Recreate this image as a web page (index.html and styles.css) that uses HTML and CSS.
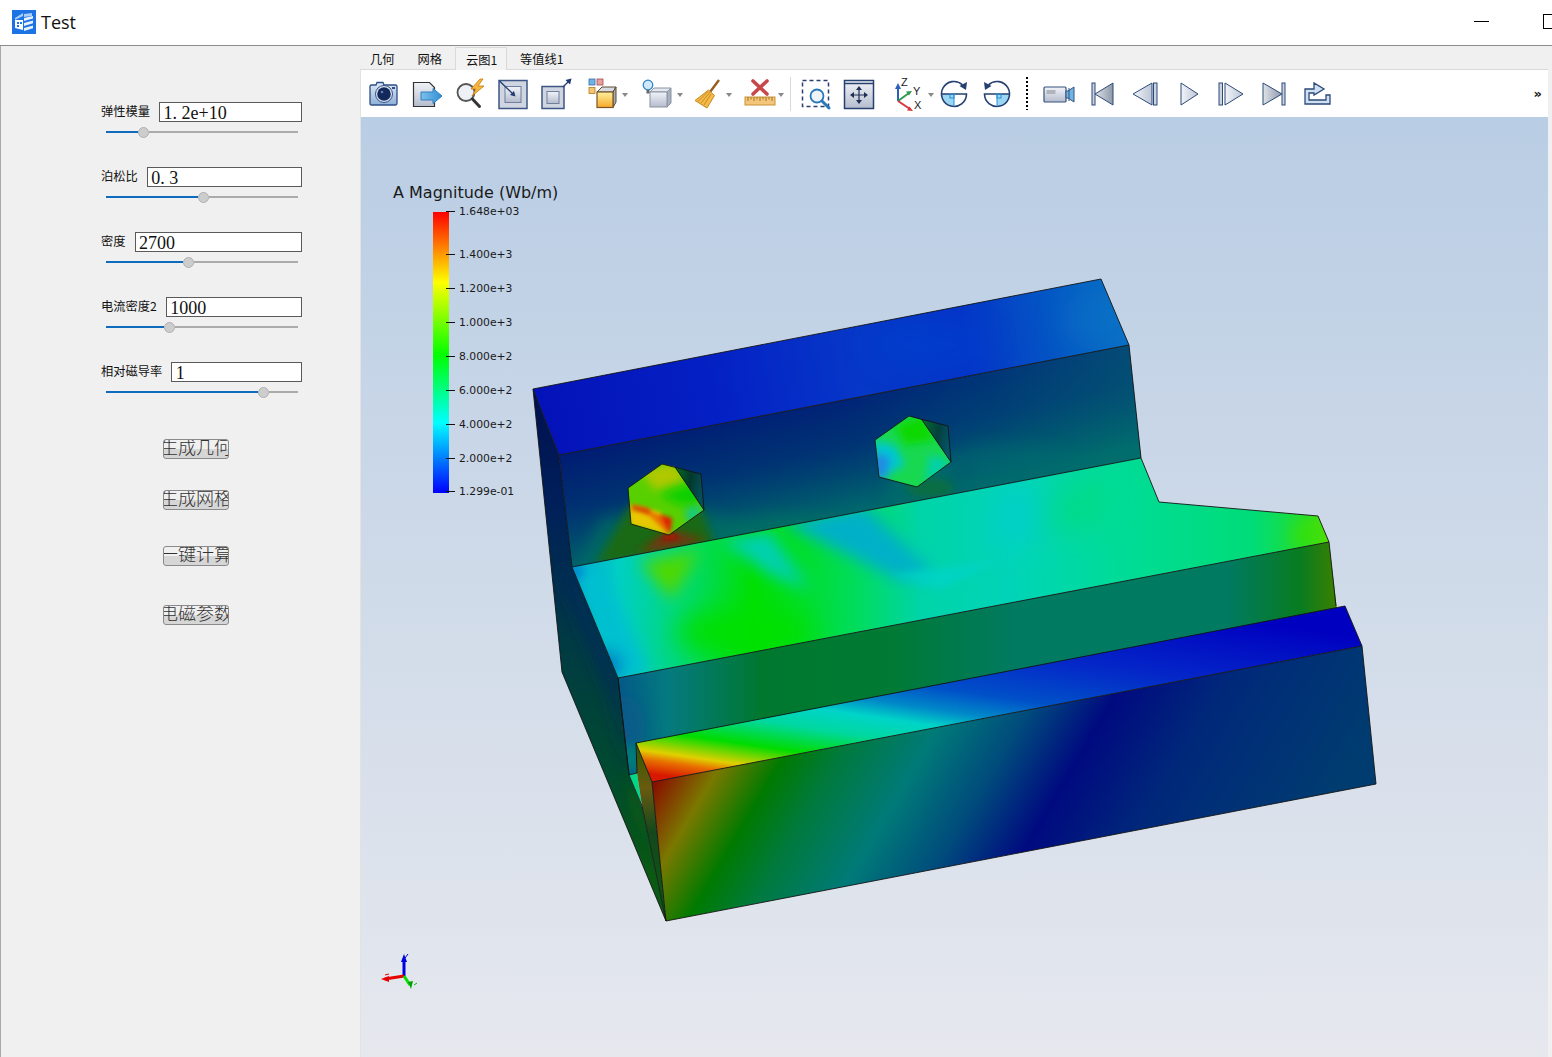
FILE: index.html
```html
<!DOCTYPE html>
<html lang="zh">
<head>
<meta charset="utf-8">
<title>Test</title>
<link rel="stylesheet" href="styles.css">
</head>
<body>
<div class="window">
  <header class="titlebar">
    <svg class="app-icon" viewBox="0 0 24 24"><rect width="24" height="24" fill="#1c74e4"/><path d="M3 8 11 3v3L3 10zM12 4l8-1v3l-8 1z" fill="#a9cdf6"/><path d="M3 10h8v10l-8-2z" fill="#fff"/><path d="M5 12h2v2H5zM5 15h2v2H5zM8 12h2v2H8z" fill="#1c74e4"/><path d="M12 8l9-2v2.600l-9 2.400zM12 13l9-2.400v2.600L12 16zM12 18l9-2.400v2.600L12 21z" fill="#e8f2fd"/></svg>
    <span class="app-name">Test</span>
    <span class="win-min"></span>
    <span class="win-max"></span>
  </header>
  <div class="main">
    <aside class="panel">
      <div class="field">
        <div class="field-row"><span class="field-label">弹性模量</span><div class="field-input">1. 2e+10</div></div>
        <div class="slider"><span class="fill" style="width:32px"></span><span class="knob"></span><span class="rest"></span></div>
      </div>
      <div class="field">
        <div class="field-row"><span class="field-label">泊松比</span><div class="field-input">0. 3</div></div>
        <div class="slider"><span class="fill" style="width:92px"></span><span class="knob"></span><span class="rest"></span></div>
      </div>
      <div class="field">
        <div class="field-row"><span class="field-label">密度</span><div class="field-input">2700</div></div>
        <div class="slider"><span class="fill" style="width:77px"></span><span class="knob"></span><span class="rest"></span></div>
      </div>
      <div class="field">
        <div class="field-row"><span class="field-label">电流密度2</span><div class="field-input">1000</div></div>
        <div class="slider"><span class="fill" style="width:58px"></span><span class="knob"></span><span class="rest"></span></div>
      </div>
      <div class="field">
        <div class="field-row"><span class="field-label">相对磁导率</span><div class="field-input">1</div></div>
        <div class="slider"><span class="fill" style="width:152px"></span><span class="knob"></span><span class="rest"></span></div>
      </div>
      <div class="actions">
        <button class="action">生成几何</button>
        <button class="action">生成网格</button>
        <button class="action">一键计算</button>
        <button class="action">电磁参数</button>
      </div>
    </aside>
    <section class="workspace">
      <nav class="tabs">
        <span class="tab">几何</span>
        <span class="tab">网格</span>
        <span class="tab tab-active">云图1</span>
        <span class="tab">等值线1</span>
      </nav>
      <div class="stage">
        <div class="toolbar">
          <svg class="tool m0" viewBox="0 0 32 32"><defs><linearGradient id="gCam" x1="0" y1="0" x2="0" y2="1"><stop offset="0" stop-color="#dfe9f6"/><stop offset="1" stop-color="#8fb0d8"/></linearGradient><linearGradient id="gGray" x1="0" y1="0" x2="0" y2="1"><stop offset="0" stop-color="#f1f3f8"/><stop offset="1" stop-color="#b4bccd"/></linearGradient><linearGradient id="gBlue" x1="0" y1="0" x2="1" y2="0"><stop offset="0" stop-color="#7fc0ea"/><stop offset="1" stop-color="#2f8fd4"/></linearGradient><linearGradient id="gSun" x1="0" y1="0" x2="0" y2="1"><stop offset="0" stop-color="#fff0a0"/><stop offset="1" stop-color="#f7a928"/></linearGradient><linearGradient id="gDark" x1="0" y1="0" x2="1" y2="0"><stop offset="0" stop-color="#dfe3ea"/><stop offset="1" stop-color="#8d98a8"/></linearGradient><linearGradient id="gLite" x1="0" y1="0" x2="1" y2="0"><stop offset="0" stop-color="#f2f4f8"/><stop offset="1" stop-color="#bcc6d6"/></linearGradient></defs><path d="M2 8.500q0-1.500 1.500-1.500H8l1-2.500h6l1 2.500h11.500q1.500 0 1.500 1.500v17q0 1.500-1.500 1.500h-24Q2 27 2 25.500z" fill="url(#gCam)" stroke="#2c4f86" stroke-width="1.300"/><circle cx="16" cy="16" r="8.500" fill="#dce6f2" stroke="#35527f"/><circle cx="16" cy="16" r="6.800" fill="#13295c"/><circle cx="14" cy="14" r="1.300" fill="#5f7eb0"/><rect x="24" y="9" width="3" height="2" fill="#2c4f86"/></svg>
          <svg class="tool" viewBox="0 0 32 32"><path d="M2.500 4.500h16l5 5v19h-21z" fill="url(#gGray)" stroke="#333" stroke-width="1.200"/><path d="M10 14h12V10.500L31 18l-9 7.500V22H10z" fill="url(#gBlue)" stroke="#2f7fc0"/></svg>
          <svg class="tool" viewBox="0 0 32 32"><circle cx="12" cy="14.500" r="8.500" fill="#eef1f6" stroke="#555" stroke-width="1.800"/><path d="M18.500 21l7 7.500" stroke="#333" stroke-width="3" stroke-linecap="round"/><path d="M26 1 17 11h5l-4 7 12-10h-6l5-7z" fill="#f6b73c" stroke="#c97a10" stroke-width=".8"/></svg>
          <svg class="tool" viewBox="0 0 32 32"><rect x="2" y="2.500" width="28" height="28" fill="#cfd5e1" stroke="#3d5685" stroke-width="1.500"/><rect x="8" y="8.500" width="16" height="16" fill="url(#gGray)" stroke="#6f7f9c"/><path d="M2.500 3 17 17" stroke="#1e3a6e" stroke-width="1.300"/><path d="M18.500 18.500l-5.500-1.500 4-4z" fill="#1e3a6e"/></svg>
          <svg class="tool m10" viewBox="0 0 32 32"><rect x="3" y="8.500" width="22" height="22" fill="#cfd5e1" stroke="#3d5685" stroke-width="1.500"/><rect x="8" y="13.500" width="12" height="12" fill="url(#gGray)" stroke="#6f7f9c"/><path d="M24 9 30 3" stroke="#1e3a6e" stroke-width="1.300"/><path d="M32.500 .500l-1.500 6-4.500-4.500z" fill="#1e3a6e"/></svg>
          <span class="tool caret m17"><svg class="tool-svg" viewBox="0 0 32 32"><rect x="1" y="1" width="6" height="6" fill="#6db3e8" stroke="#3a6ea5" stroke-width=".8"/><rect x="9" y="1" width="6" height="6" fill="#e8a0a0" stroke="#a04a4a" stroke-width=".8"/><rect x="1" y="9.500" width="6" height="6" fill="#f7c470" stroke="#b07a20" stroke-width=".8"/><path d="M9 14l5-5h14l-3 5z" fill="#d6dbe4" stroke="#5b4a30"/><path d="M25 14l3-5v15l-3 5.500z" fill="#a6adba" stroke="#5b4a30"/><rect x="9" y="14" width="16" height="15.500" fill="url(#gSun)" stroke="#7a5526" stroke-width="1.200"/></svg></span>
          <span class="tool caret m23"><svg class="tool-svg" viewBox="0 0 32 32"><path d="M7 14l4-4h17l-4 4z" fill="#e4e7ec" stroke="#8a93a3"/><path d="M24 14l4-4v15l-4 4z" fill="#a8b1bf" stroke="#8a93a3"/><rect x="7" y="14" width="17" height="15" fill="url(#gGray)" stroke="#8a93a3"/><circle cx="5" cy="7" r="4.800" fill="#cfe8fa" stroke="#2a7fc0" stroke-width="1.200"/><path d="M3.500 12h3v3.500h-3z" fill="#666"/></svg></span>
          <span class="tool caret m17"><svg class="tool-svg" viewBox="0 0 32 32"><path d="M27 2 18 14" stroke="#9a5a20" stroke-width="2.400"/><path d="M16.500 12l6 5.500L15 30 3 22.500z" fill="#f4bb4a" stroke="#c88a20"/><path d="M9 25 18 14M12 27l7-11M6 23.500 16 13.500" stroke="#c88a20" fill="none"/></svg></span>
          <span class="tool caret m20"><svg class="tool-svg" viewBox="0 0 32 32"><path d="M9 3l14 13M23 3 9 16" stroke="#c8474a" stroke-width="3.600" stroke-linecap="round"/><rect x="1" y="19" width="30" height="8" fill="#f3c679" stroke="#c89238"/><path d="M4 19v4M7 19v2.500M10 19v4M13 19v2.500M16 19v4M19 19v2.500M22 19v4M25 19v2.500M28 19v4" stroke="#a87220"/></svg></span>
          <span class="sep-line"></span>
          <svg class="tool m8" viewBox="0 0 32 32"><rect x="3.500" y="2.500" width="26" height="26" fill="none" stroke="#2a3f6e" stroke-width="1.500" stroke-dasharray="4 3"/><circle cx="18" cy="18" r="6.500" fill="#eef3f9" stroke="#2a78b8" stroke-width="1.800"/><path d="M23 23l7 7" stroke="#2a78b8" stroke-width="3" stroke-linecap="round"/></svg>
          <svg class="tool m12" viewBox="0 0 32 32"><rect x="1.500" y="2.500" width="29" height="28" fill="url(#gGray)" stroke="#26406f" stroke-width="1.500"/><path d="M2 5.500h28" stroke="#26406f" stroke-width="1.500"/><path d="M16 10v14M9 17h14" stroke="#1f2f55" stroke-width="1.200"/><path d="M16 8l-3 4h6zM16 26l-3-4h6zM7 17l4-3v6zM25 17l-4-3v6z" fill="#1f2f55"/></svg>
          <span class="tool caret m19"><svg class="tool-svg" viewBox="0 0 32 32"><path d="M4 23V8" stroke="#2a62b8" stroke-width="2"/><path d="M4 5 1 11h6z" fill="#2a62b8"/><path d="M4 23 15 15" stroke="#2e9a50" stroke-width="2"/><path d="M18 13l-6 .500 3 4z" fill="#2e9a50"/><path d="M4 23l12 8" stroke="#d8383a" stroke-width="2"/><path d="M19 33l-6-.500 2.500-4z" fill="#d8383a"/><text x="7" y="8" class="axis-letter">Z</text><text x="19" y="17" class="axis-letter">Y</text><text x="20" y="31" class="axis-letter">X</text></svg></span>
          <svg class="tool m12" viewBox="0 0 32 32"><path d="M16 16V28.500A12.500 12.500 0 0 1 3.500 16z" fill="#9ad6f5"/><path d="M24.500 6.800A12.500 12.500 0 1 0 28.500 16H3.500" fill="none" stroke="#26406f" stroke-width="1.600"/><path d="M16 16V28.500" stroke="#2a8fd0"/><path d="M29 4 28 12 21.500 8z" fill="#26406f"/><rect x="12" y="16" width="4" height="4" fill="none" stroke="#2a8fd0"/></svg>
          <svg class="tool" viewBox="0 0 32 32"><path d="M16 16V28.500A12.500 12.500 0 0 0 28.500 16z" fill="#9ad6f5"/><path d="M7.500 6.800A12.500 12.500 0 1 1 3.500 16H28.500" fill="none" stroke="#26406f" stroke-width="1.600"/><path d="M16 16V28.500" stroke="#2a8fd0"/><path d="M3 4 4 12 10.500 8z" fill="#26406f"/><rect x="16" y="16" width="4" height="4" fill="none" stroke="#2a8fd0"/></svg>
          <span class="sep-dots"></span>
          <svg class="tool m15" viewBox="0 0 32 32"><rect x="1" y="9" width="22" height="15" rx="1" fill="url(#gGray)" stroke="#36527f" stroke-width="1.200"/><rect x="3.500" y="12" width="9" height="4" fill="#b0b4bb"/><path d="M23 13h2l6-4v15l-6-4h-2z" fill="#6fb4e4" stroke="#36527f"/><path d="M26 10v13" stroke="#36527f"/></svg>
          <svg class="tool" viewBox="0 0 32 32"><rect x="6" y="5" width="3" height="22" fill="#cbd3e0" stroke="#2d4a78"/><path d="M9 16 27 5v22z" fill="url(#gDark)" stroke="#2d4a78"/></svg>
          <svg class="tool" viewBox="0 0 32 32"><path d="M4 16 23 5v22z" fill="url(#gLite)" stroke="#2d4a78"/><rect x="24.500" y="5" width="3.500" height="22" fill="#cbd3e0" stroke="#2d4a78"/></svg>
          <svg class="tool" viewBox="0 0 32 32"><path d="M9 5 26 16 9 27z" fill="url(#gLite)" stroke="#2d4a78"/></svg>
          <svg class="tool" viewBox="0 0 32 32"><rect x="4" y="5" width="3.500" height="22" fill="#cbd3e0" stroke="#2d4a78"/><path d="M10 5 28 16 10 27z" fill="url(#gLite)" stroke="#2d4a78"/></svg>
          <svg class="tool" viewBox="0 0 32 32"><path d="M5 5 24 16 5 27z" fill="url(#gDark)" stroke="#2d4a78"/><rect x="24" y="5" width="3" height="22" fill="#cbd3e0" stroke="#2d4a78"/></svg>
          <svg class="tool" viewBox="0 0 32 32"><path d="M4 26V11H13V5L23 11 13 17V15H8V22H25V17H29V26Z" fill="#cfe0f2" stroke="#2d4a78" stroke-width="1.300"/></svg>
          <span class="more">»</span>
        </div>
        <div class="viewport">
          <svg class="scene" viewBox="361 117 1187 940">
            <defs>
              <filter id="b2" x="-50%" y="-50%" width="200%" height="200%"><feGaussianBlur stdDeviation="2"/></filter>
              <filter id="b4" x="-50%" y="-50%" width="200%" height="200%"><feGaussianBlur stdDeviation="4"/></filter>
              <filter id="b8" x="-50%" y="-50%" width="200%" height="200%"><feGaussianBlur stdDeviation="8"/></filter>
              <filter id="b14" x="-50%" y="-50%" width="200%" height="200%"><feGaussianBlur stdDeviation="14"/></filter>
              <linearGradient id="fTop" gradientUnits="userSpaceOnUse" x1="533" y1="420" x2="1129" y2="310">
                <stop offset="0" stop-color="#0412b8"/><stop offset=".3" stop-color="#0420c4"/><stop offset=".55" stop-color="#0638c8"/><stop offset=".72" stop-color="#0434c8"/><stop offset=".88" stop-color="#0458c4"/><stop offset="1" stop-color="#0870c4"/>
              </linearGradient>
              <linearGradient id="fBack" gradientUnits="userSpaceOnUse" x1="559" y1="500" x2="1141" y2="400">
                <stop offset="0" stop-color="#001a74"/><stop offset=".5" stop-color="#001f78"/><stop offset=".75" stop-color="#00307a"/><stop offset="1" stop-color="#044878"/>
              </linearGradient>
              <linearGradient id="fBackV" gradientUnits="userSpaceOnUse" x1="800" y1="400" x2="825" y2="515">
                <stop offset="0" stop-color="#006a60" stop-opacity="0"/><stop offset=".45" stop-color="#00606c" stop-opacity=".3"/><stop offset="1" stop-color="#00786a" stop-opacity=".8"/>
              </linearGradient>
              <linearGradient id="fMid" gradientUnits="userSpaceOnUse" x1="572" y1="0" x2="1329" y2="0">
                <stop offset="0" stop-color="#00a0d0"/><stop offset=".06" stop-color="#00cfc4"/><stop offset=".14" stop-color="#00d880"/><stop offset=".24" stop-color="#00e000"/><stop offset=".38" stop-color="#00dc60"/><stop offset=".46" stop-color="#00d4a8"/><stop offset=".58" stop-color="#00d4b8"/><stop offset=".72" stop-color="#00dc98"/><stop offset=".9" stop-color="#00dc78"/><stop offset=".97" stop-color="#20de30"/><stop offset="1" stop-color="#60dc10"/>
              </linearGradient>
              <linearGradient id="fWall" gradientUnits="userSpaceOnUse" x1="618" y1="0" x2="1336" y2="0">
                <stop offset="0" stop-color="#045a88"/><stop offset=".07" stop-color="#047a80"/><stop offset=".2" stop-color="#00782e"/><stop offset=".38" stop-color="#007a34"/><stop offset=".55" stop-color="#007a60"/><stop offset=".85" stop-color="#007a60"/><stop offset=".95" stop-color="#087c20"/><stop offset="1" stop-color="#3a8000"/>
              </linearGradient>
              <linearGradient id="fRidge" gradientUnits="userSpaceOnUse" x1="720" y1="784" x2="755" y2="547">
                <stop offset="0" stop-color="#d81800"/><stop offset=".057" stop-color="#e87000"/><stop offset=".093" stop-color="#e0d000"/><stop offset=".18" stop-color="#00dc00"/><stop offset=".286" stop-color="#00d8a0"/><stop offset=".37" stop-color="#00d4c8"/><stop offset=".44" stop-color="#0088c8"/><stop offset=".53" stop-color="#0050c8"/><stop offset=".71" stop-color="#0428c8"/><stop offset="1" stop-color="#0000c0"/>
              </linearGradient>
              <linearGradient id="fFront" gradientUnits="userSpaceOnUse" x1="652" y1="782" x2="1162" y2="1082">
                <stop offset="0" stop-color="#8a0800"/><stop offset=".085" stop-color="#7a7800"/><stop offset=".17" stop-color="#007a00"/><stop offset=".25" stop-color="#007a3c"/><stop offset=".37" stop-color="#007a78"/><stop offset=".49" stop-color="#004a7c"/><stop offset=".6" stop-color="#000a80"/><stop offset=".75" stop-color="#00287a"/><stop offset="1" stop-color="#003c70"/>
              </linearGradient>
              <linearGradient id="fSide" gradientUnits="userSpaceOnUse" x1="0" y1="390" x2="40" y2="920">
                <stop offset="0" stop-color="#000a4c"/><stop offset=".3" stop-color="#00205a"/><stop offset=".55" stop-color="#003a44"/><stop offset=".8" stop-color="#004a30"/><stop offset="1" stop-color="#0a5a14"/>
              </linearGradient>
              <linearGradient id="fStrip" gradientUnits="userSpaceOnUse" x1="0" y1="743" x2="0" y2="921">
                <stop offset="0" stop-color="#2a5a00"/><stop offset=".25" stop-color="#6a5a10"/><stop offset=".5" stop-color="#14481c"/><stop offset="1" stop-color="#0a5a10"/>
              </linearGradient>
              <linearGradient id="fShade1" gradientUnits="userSpaceOnUse" x1="675" y1="475" x2="704" y2="480">
                <stop offset="0" stop-color="#006a20"/><stop offset=".55" stop-color="#04382c"/><stop offset="1" stop-color="#045058"/>
              </linearGradient>
              <linearGradient id="fShade2" gradientUnits="userSpaceOnUse" x1="922" y1="430" x2="951" y2="436">
                <stop offset="0" stop-color="#006a30"/><stop offset=".55" stop-color="#04403c"/><stop offset="1" stop-color="#045468"/>
              </linearGradient>
              <clipPath id="cBack"><polygon points="559,455 1129,345 1141,458 572,567"/></clipPath>
              <clipPath id="cMid"><polygon points="572,567 1141,458 1159,502 1318,516 1329,542 618,678"/></clipPath>
              <clipPath id="cTop"><polygon points="533,389 1101,279 1129,345 559,455"/></clipPath>
              <clipPath id="cH1"><polygon points="662,464 675,467 704,510 669,535 631,524 628,488"/></clipPath>
              <clipPath id="cH2"><polygon points="909,416 922,420 951,462 917,487 879,477 875,440"/></clipPath>
              <clipPath id="cSide"><polygon points="533,389 559,455 572,567 618,678 629,775 642,807 666,921 562,672"/></clipPath>
              <clipPath id="cWall"><polygon points="618,678 1329,542 1337,610 636,745 637,773 629,775"/></clipPath>
            </defs>

            <polygon points="533,389 559,455 572,567 618,678 629,775 642,807 666,921 562,672" fill="url(#fSide)"/>
            <g clip-path="url(#cSide)">
              <polygon points="572,567 618,678 629,775 612,700 560,570" fill="#002a58" filter="url(#b8)"/>
              <polygon points="625,770 642,807 652,860 630,810" fill="#0a5a14" filter="url(#b4)" opacity=".7"/>
            </g>

            <polygon points="533,389 1101,279 1129,345 559,455" fill="url(#fTop)"/>
            <g clip-path="url(#cTop)">
              <ellipse cx="930" cy="345" rx="60" ry="25" fill="#0040cc" filter="url(#b14)" opacity=".7"/>
              <ellipse cx="1100" cy="320" rx="40" ry="30" fill="#0878c8" filter="url(#b14)" opacity=".4"/>
            </g>

            <polygon points="559,455 1129,345 1141,458 572,567" fill="url(#fBack)"/>
            <g clip-path="url(#cBack)">
              <polygon points="559,455 1129,345 1141,458 572,567" fill="url(#fBackV)"/>
              <path d="M578 570 L600 520 L640 510 L700 510 L730 520 L790 515 L860 525 L700 560z" fill="#007060" filter="url(#b8)" opacity=".75"/>
              <polygon points="595,566 630,505 700,505 715,545" fill="#1c6a10" filter="url(#b4)" opacity=".9"/>
              <polygon points="638,553 668,530 708,540" fill="#7a3008" filter="url(#b4)"/>
              <polygon points="660,540 670,533 680,538" fill="#b01000" filter="url(#b2)"/>
              <polygon points="885,500 895,470 960,460 945,490" fill="#00706a" filter="url(#b8)" opacity=".8"/>
              <ellipse cx="930" cy="488" rx="24" ry="10" fill="#107030" filter="url(#b4)" opacity=".7"/>
              <ellipse cx="1010" cy="460" rx="60" ry="16" fill="#006a70" filter="url(#b8)" opacity=".5"/>
            </g>

            <polygon points="662,464 675,467 704,510 669,535 631,524 628,488" fill="#58d000"/>
            <g clip-path="url(#cH1)">
              <polygon points="640,470 675,462 685,480 655,490" fill="#b0c800" filter="url(#b4)"/>
              <polygon points="660,495 700,480 700,505 680,505" fill="#10d000" filter="url(#b4)"/>
              <polygon points="685,510 705,505 690,525" fill="#00c8a8" filter="url(#b4)"/>
              <polygon points="628,505 660,512 670,535 630,525" fill="#e8c800" filter="url(#b2)"/>
              <polygon points="630,503 664,517 669,535 650,516" fill="#e87000" filter="url(#b2)"/>
              <polygon points="660,515 672,518 670,535" fill="#e81800" filter="url(#b2)"/>
              <polygon points="632,505 650,509 650,514 632,510" fill="#d84000" filter="url(#b2)"/>
            </g>
            <polygon points="675,467 701,474 704,510" fill="url(#fShade1)"/>

            <polygon points="909,416 922,420 951,462 917,487 879,477 875,440" fill="#18d850"/>
            <g clip-path="url(#cH2)">
              <polygon points="895,425 925,415 935,440 905,445" fill="#10d800" filter="url(#b4)"/>
              <polygon points="872,440 895,445 905,465 880,478" fill="#00c8d0" filter="url(#b4)"/>
              <polygon points="872,452 890,458 885,480 875,478" fill="#2088e8" filter="url(#b4)"/>
              <polygon points="930,455 952,462 925,485" fill="#00d0b0" filter="url(#b4)"/>
            </g>
            <polygon points="922,420 948,426 951,462" fill="url(#fShade2)"/>

            <polygon points="572,567 1141,458 1159,502 1318,516 1329,542 618,678" fill="url(#fMid)"/>
            <g clip-path="url(#cMid)">
              <polygon points="572,567 600,565 650,672 618,685" fill="#00c0d0" filter="url(#b8)"/>
              <ellipse cx="606" cy="665" rx="16" ry="14" fill="#0080c8" filter="url(#b8)"/>
              <ellipse cx="572" cy="572" rx="12" ry="10" fill="#0090d0" filter="url(#b4)"/>
              <polygon points="640,562 700,550 672,600" fill="#50d800" filter="url(#b8)"/>
              <polygon points="780,522 865,505 935,575 900,580" fill="#00b0c8" filter="url(#b8)"/>
              <polygon points="720,540 770,530 810,590 770,575" fill="#00d0b0" filter="url(#b8)"/>
              <polygon points="890,575 1000,560 940,590" fill="#00d4c8" filter="url(#b4)" opacity=".8"/>
              <polygon points="1000,495 1030,480 1040,540 990,545" fill="#00d0c8" filter="url(#b14)"/>
              <polygon points="1060,490 1110,470 1100,530 1050,530" fill="#00dc80" filter="url(#b14)" opacity=".7"/>
              <ellipse cx="745" cy="632" rx="70" ry="24" fill="#00e000" filter="url(#b14)"/>
              <polygon points="1295,520 1325,515 1330,545 1290,550" fill="#40e000" filter="url(#b8)" opacity=".7"/>
            </g>

            <polygon points="618,678 1329,542 1337,610 636,745 637,773 629,775" fill="url(#fWall)"/>
            <g clip-path="url(#cWall)">
              <ellipse cx="625" cy="730" rx="20" ry="35" fill="#0a5a8a" filter="url(#b8)" opacity=".7"/>
              <polygon points="618,770 640,770 640,745 620,745" fill="#007a7a" filter="url(#b4)"/>
            </g>
            <polygon points="629,775 637,773 642,806" fill="#00d888"/>

            <polygon points="636,743 1345,606 1362,646 652,782" fill="url(#fRidge)"/>
            <polygon points="652,782 1362,646 1376,784 666,921" fill="url(#fFront)"/>
            <polygon points="636,743 652,782 666,921 642,806 637,773" fill="url(#fStrip)"/>

            <g class="edges">
              <polygon points="533,389 1101,279 1129,345 559,455"/>
              <path d="M533 389 562 672 666 921M559 455 572 567 618 678 629 775 642 806 666 921"/>
              <path d="M572 567 1141 458 1129 345M1141 458 1159 502 1318 516 1329 542 618 678"/>
              <path d="M1329 542 1336 606M618 678 629 775 637 773 636 743"/>
              <path d="M636 743 1345 606 1362 646 652 782 636 743M652 782 666 921 1376 784 1362 646"/>
              <polygon points="662,464 701,474 704,510 669,535 631,524 628,488"/>
              <path d="M675 467 704 510"/>
              <polygon points="909,416 948,426 951,462 917,487 879,477 875,440"/>
              <path d="M922 420 951 462"/>
            </g>

            <g class="triad">
              <path d="M404 976V961" stroke="#0000e0" stroke-width="3"/>
              <path d="M404 976 385 979" stroke="#e80000" stroke-width="3"/>
              <path d="M404 976 410 985" stroke="#00e000" stroke-width="3"/>
              <path d="M404 954l-3 8h6z" fill="#0000e0"/>
              <path d="M381 979l8-3v6z" fill="#e80000"/>
              <path d="M411 989l-3-7 5-1z" fill="#00a000"/>
              <path d="M405 958l3-4" stroke="#0000e0"/>
              <path d="M385 975l4-1" stroke="#e80000"/>
              <path d="M414 985l3-2" stroke="#00c000"/>
            </g>
          </svg>

          <div class="legend">
            <div class="legend-title">A Magnitude (Wb/m)</div>
            <div class="colorbar"></div>
            <div class="tick" style="top:30px"><span class="tick-mark"></span>1.648e+03</div>
            <div class="tick" style="top:73px"><span class="tick-mark"></span>1.400e+3</div>
            <div class="tick" style="top:107px"><span class="tick-mark"></span>1.200e+3</div>
            <div class="tick" style="top:141px"><span class="tick-mark"></span>1.000e+3</div>
            <div class="tick" style="top:175px"><span class="tick-mark"></span>8.000e+2</div>
            <div class="tick" style="top:209px"><span class="tick-mark"></span>6.000e+2</div>
            <div class="tick" style="top:243px"><span class="tick-mark"></span>4.000e+2</div>
            <div class="tick" style="top:277px"><span class="tick-mark"></span>2.000e+2</div>
            <div class="tick" style="top:310px"><span class="tick-mark"></span>1.299e-01</div>
          </div>
        </div>
      </div>
    </section>
  </div>
</div>
</body>
</html>
```
FILE: styles.css
```css
* { box-sizing: border-box; }
html, body { margin: 0; padding: 0; height: 100%; overflow: hidden; }
body { background: #fff; font-family: "Noto Sans CJK SC", "Noto Sans", sans-serif; color: #111; }

.window { display: flex; flex-direction: column; width: 1552px; height: 1057px; overflow: hidden; }

.titlebar { display: flex; align-items: center; flex: none; height: 46px; padding: 0 0 2px 12px; background: #fff; border-bottom: 1px solid #8b8b90; overflow: hidden; }
.app-icon { width: 24px; height: 24px; flex: none; }
.app-name { margin-left: 5px; font: 18px "Open Sans", sans-serif; color: #111; }
.win-min { width: 15px; height: 1px; margin-left: auto; background: #000; }
.win-max { width: 15px; height: 15px; margin-left: 54px; margin-right: -6px; flex: none; border: 1px solid #000; }

.main { display: flex; flex: 1; min-height: 0; }

.panel { flex: none; width: 360px; padding-top: 56px; background: #f0f0f0; border-left: 1px solid #a8a8a8; }

.field { width: 201px; height: 36px; margin: 0 0 29px 100px; }
.field-row { display: flex; align-items: center; gap: 9px; height: 20px; }
.field-label { flex: none; font-size: 12.25px; line-height: 16px; margin-top: -2px; color: #111; white-space: nowrap; }
.field-input { flex: 1; min-width: 0; height: 20px; padding-left: 3.5px; background: #fff; border: 1px solid #5a5a5a; font: 18px/21px "Liberation Serif", serif; color: #111; white-space: pre; overflow: hidden; }

.slider { display: flex; align-items: center; width: 192px; height: 12px; margin: 4px 0 0 5px; }
.fill { flex: none; height: 2px; background: #0f6cbd; }
.knob { flex: none; width: 11px; height: 11px; border-radius: 50%; background: #cdcdcd; border: 1px solid #b0b0b0; }
.rest { flex: 1; height: 2px; background: #ababab; }

.actions { display: flex; flex-direction: column; align-items: flex-start; margin: 41px 0 0 162px; }
.action { display: flex; justify-content: center; width: 66px; height: 20px; padding: 0; border: 1px solid #8a8a8a; border-radius: 3px; background: linear-gradient(#f0f0f0 50%, #d6d6d6 50%); font-family: "Liberation Serif", "Noto Sans CJK SC", serif; font-weight: 300; font-size: 18px; line-height: 17px; color: #333; white-space: nowrap; overflow: hidden; }
.action:nth-child(2) { margin-top: 31px; }
.action:nth-child(3) { margin-top: 36px; }
.action:nth-child(4) { margin-top: 39px; }

.workspace { display: flex; flex-direction: column; flex: 1; min-width: 0; padding-right: 4px; background: #f0f0f0; }

.tabs { display: flex; flex: none; height: 24px; background: #f0f0f0; border-bottom: 1px solid #d9d9d9; }
.tab { display: flex; align-items: center; height: 23px; margin-left: 2px; padding: 2px 11px 0; font-size: 12.25px; color: #111; white-space: nowrap; }
.tab:first-child { margin-left: -1px; padding-right: 10px; }
.tab-active { width: 52px; margin-top: 1px; padding: 2px 10px 0; background: #f3f3f3; border: 1px solid #d9d9d9; border-bottom: none; }

.stage { display: flex; flex-direction: column; flex: 1; min-height: 0; border-left: 1px solid #e2e2e2; }

.toolbar { display: flex; align-items: center; flex: none; height: 47px; padding-left: 7px; background: #fff; }
.tool { position: relative; display: block; flex: none; width: 32px; height: 32px; margin-left: 11px; overflow: visible; }
.tool-svg { display: block; width: 32px; height: 32px; overflow: visible; }
.caret::after { content: ""; position: absolute; left: 34px; top: 15px; border: 3px solid transparent; border-top: 4px solid #888; border-bottom: 0; }
.m0 { margin-left: 0; }
.m8 { margin-left: 8px; }
.m10 { margin-left: 10px; }
.m12 { margin-left: 12px; }
.m15 { margin-left: 15px; }
.m17 { margin-left: 17px; }
.m19 { margin-left: 19px; }
.m20 { margin-left: 20px; }
.m23 { margin-left: 23px; }
.sep-line { flex: none; width: 1px; height: 34px; margin-left: 14px; background: #d8d8d8; }
.sep-dots { flex: none; width: 2px; height: 33px; margin-left: 13px; background: repeating-linear-gradient(#000 0 2px, transparent 2px 4px); }
.more { margin-left: auto; margin-right: 6px; font: bold 13px "DejaVu Sans", sans-serif; color: #111; }
.axis-letter { font: 11px "Liberation Sans", sans-serif; fill: #222; }

.viewport { position: relative; flex: 1; min-height: 0; overflow: hidden; background: linear-gradient(#b9cde4, #e6e8ee); }
.scene { position: absolute; left: 0; top: 0; width: 1187px; height: 940px; }
.edges { fill: none; stroke: #141414; stroke-width: .9; stroke-linejoin: round; }

.legend { position: absolute; left: 32px; top: 64px; width: 180px; height: 320px; color: #1a1a1a; font-family: "DejaVu Sans", sans-serif; }
.legend-title { margin-top: 2px; font-size: 16px; line-height: 20px; white-space: nowrap; }
.colorbar { position: absolute; left: 40px; top: 31px; width: 16px; height: 281px; background: linear-gradient(#ff0000, #ffff00 25%, #00ff00 51%, #00ffff 75%, #0000ff); }
.tick { position: absolute; left: 53px; display: flex; align-items: center; height: 0; font-size: 10.8px; white-space: nowrap; }
.tick-mark { width: 9px; height: 1px; margin-right: 4px; background: #111; }
```
